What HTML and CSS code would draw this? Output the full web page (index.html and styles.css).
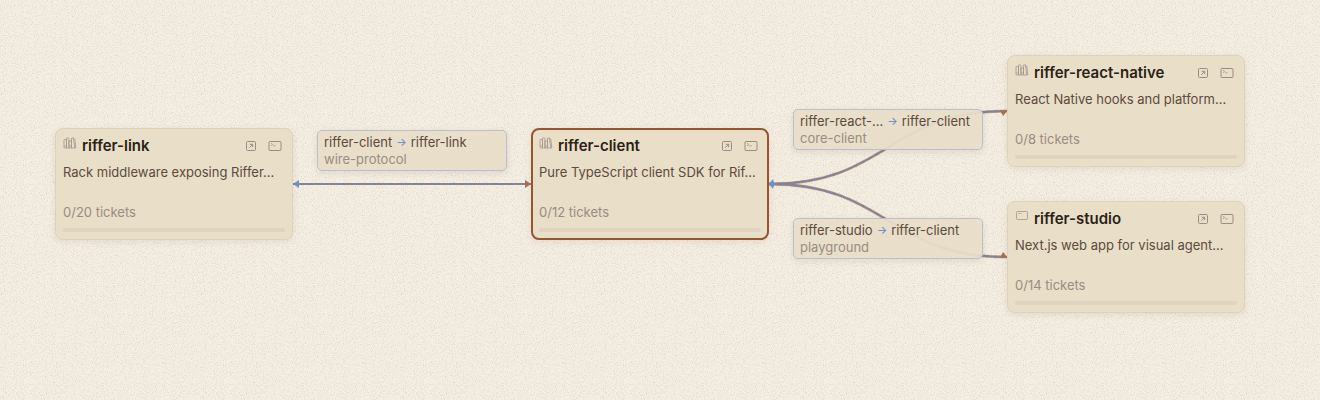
FILE: index.html
```html
<!DOCTYPE html>
<html lang="en">
<head>
    <meta charset="UTF-8">
    <meta name="viewport" content="width=device-width, initial-scale=1.0">
    <title>Riffer projects</title>
    <link rel="stylesheet" href="styles.css">
</head>
<body>
    <!-- shared icons -->
    <svg class="sprite" aria-hidden="true">
        <symbol id="icon-books" viewBox="0 0 14 12">
            <rect x="1" y="2.5" width="2.5" height="8.5" rx="0.5"/>
            <path d="M3.5 11V1.5c0-.4.2-.6.6-.6h1.2c.4 0 .6.2.6.6V11zM5.9 4h2.6v7H5.9zM6.2 9h2M1.3 9h2"/>
            <path d="M8.5 1.2l1.9-.4 1.4 10.2H8.5zM10.6 2.3l1.2-.2 1 8.7-1 .2"/>
        </symbol>
        <symbol id="icon-window" viewBox="0 0 14 12">
            <rect x="1.5" y="1.5" width="11" height="8" rx="1"/>
            <path d="M3 3.5h3.5" stroke-width="0.6"/>
        </symbol>
        <symbol id="icon-open" viewBox="0 0 12 12">
            <rect x="1.5" y="1.5" width="9" height="9" rx="1"/>
            <path d="M4.3 7.7l3.2-3.2M4.8 4.3h2.9v2.9"/>
        </symbol>
        <symbol id="icon-terminal" viewBox="0 0 14 12">
            <rect x="1" y="1.5" width="12" height="9" rx="1"/>
            <path d="M3 3.2l1.7 1.3L3 5.8M5.3 5.8h2.4" stroke-width="0.7"/>
        </symbol>
    </svg>

    <main class="canvas">
        <svg class="edges" aria-hidden="true">
            <g class="edge">
                <path class="line-blue" d="M293 184H531"/>
                <path class="line-brown" d="M301 184H526"/>
                <path class="head-blue" d="M299 180l-6 4 6 4z"/>
                <path class="head-brown" d="M525 180l6 4-6 4z"/>
            </g>
            <g class="edge">
                <path class="line-under" d="M769 184C888 184 888 111 1007 111"/>
                <path class="line-blue" d="M769 184C888 184 888 111 1007 111"/>
                <path class="line-brown" d="M769 184C888 184 888 111 1007 111"/>
                <path class="head-brown" d="M1000 110l7 1-4 5z"/>
            </g>
            <g class="edge">
                <path class="line-under" d="M769 184C888 184 888 257 1007 257"/>
                <path class="line-blue" d="M769 184C888 184 888 257 1007 257"/>
                <path class="line-brown" d="M769 184C888 184 888 257 1007 257"/>
                <path class="head-blue" d="M769 184l4-5 1 4 4 1-4 1-1 4z"/>
                <path class="head-brown" d="M1000 258l7-1-4-5z"/>
            </g>
        </svg>

        <div class="edge-label label-link">
            <div class="route"><span>riffer-client</span><span class="arrow">→</span><span>riffer-link</span></div>
            <div class="kind">wire-protocol</div>
        </div>
        <div class="edge-label label-native">
            <div class="route"><span title="riffer-react-native">riffer-react-…</span><span class="arrow">→</span><span>riffer-client</span></div>
            <div class="kind">core-client</div>
        </div>
        <div class="edge-label label-studio">
            <div class="route"><span>riffer-studio</span><span class="arrow">→</span><span>riffer-client</span></div>
            <div class="kind">playground</div>
        </div>

        <article class="node node-link">
            <header class="node-header">
                <svg class="node-icon"><use href="#icon-books"/></svg>
                <h2 class="node-title">riffer-link</h2>
                <button class="node-btn" aria-label="Open riffer-link"><svg class="icon-open"><use href="#icon-open"/></svg></button>
                <button class="node-btn" aria-label="Terminal for riffer-link"><svg class="icon-terminal"><use href="#icon-terminal"/></svg></button>
            </header>
            <p class="node-desc">Rack middleware exposing Riffer…</p>
            <p class="node-tickets">0/20 tickets</p>
            <div class="node-progress"></div>
        </article>

        <article class="node node-client selected">
            <header class="node-header">
                <svg class="node-icon"><use href="#icon-books"/></svg>
                <h2 class="node-title">riffer-client</h2>
                <button class="node-btn" aria-label="Open riffer-client"><svg class="icon-open"><use href="#icon-open"/></svg></button>
                <button class="node-btn" aria-label="Terminal for riffer-client"><svg class="icon-terminal"><use href="#icon-terminal"/></svg></button>
            </header>
            <p class="node-desc">Pure TypeScript client SDK for Rif…</p>
            <p class="node-tickets">0/12 tickets</p>
            <div class="node-progress"></div>
        </article>

        <article class="node node-native">
            <header class="node-header">
                <svg class="node-icon"><use href="#icon-books"/></svg>
                <h2 class="node-title">riffer-react-native</h2>
                <button class="node-btn" aria-label="Open riffer-react-native"><svg class="icon-open"><use href="#icon-open"/></svg></button>
                <button class="node-btn" aria-label="Terminal for riffer-react-native"><svg class="icon-terminal"><use href="#icon-terminal"/></svg></button>
            </header>
            <p class="node-desc">React Native hooks and platform…</p>
            <p class="node-tickets">0/8 tickets</p>
            <div class="node-progress"></div>
        </article>

        <article class="node node-studio">
            <header class="node-header">
                <svg class="node-icon"><use href="#icon-window"/></svg>
                <h2 class="node-title">riffer-studio</h2>
                <button class="node-btn" aria-label="Open riffer-studio"><svg class="icon-open"><use href="#icon-open"/></svg></button>
                <button class="node-btn" aria-label="Terminal for riffer-studio"><svg class="icon-terminal"><use href="#icon-terminal"/></svg></button>
            </header>
            <p class="node-desc">Next.js web app for visual agent…</p>
            <p class="node-tickets">0/14 tickets</p>
            <div class="node-progress"></div>
        </article>
    </main>
</body>
</html>
```
FILE: styles.css
```css
* {
    margin: 0;
    padding: 0;
    box-sizing: border-box;
}

body {
    min-height: 100vh;
    font-family: Inter, sans-serif;
    font-size: 13px;
    color: #5c4a3d;
    background-color: #f5eee2;
    /* paper grain */
    background-image: url("data:image/svg+xml,%3Csvg xmlns='http://www.w3.org/2000/svg' width='200' height='200'%3E%3Cfilter id='n'%3E%3CfeTurbulence type='fractalNoise' baseFrequency='0.9' numOctaves='4' stitchTiles='stitch'/%3E%3CfeColorMatrix values='0 0 0 0 0.45 0 0 0 0 0.4 0 0 0 0 0.33 0 0 0 1.2 -0.56'/%3E%3C/filter%3E%3Crect width='200' height='200' filter='url(%23n)' opacity='0.7'/%3E%3C/svg%3E");
}

.sprite {
    display: none;
}

.canvas {
    position: relative;
    min-height: 100vh;
    overflow: hidden;
}

.edges {
    position: absolute;
    inset: 0;
    width: 100%;
    height: 100%;
    fill: none;
}

.line-under {
    stroke: #b07850;
    stroke-width: 3;
    opacity: 0.5;
}

.line-blue {
    stroke: #7b86ab;
    stroke-width: 2;
}

.line-brown {
    stroke: #b07850;
    stroke-width: 2;
    stroke-dasharray: 3 5;
    opacity: 0.55;
}

.head-blue {
    fill: #6d92cc;
}

.head-brown {
    fill: #ac6f4c;
}

/* projects */
.node {
    position: absolute;
    width: 238px;
    padding: 7px;
    background: #e9dec8;
    border: 1px solid #ded3ba;
    border-radius: 8px;
    box-shadow: 0 2px 6px rgba(92, 74, 61, 0.1);
}

.node.selected {
    padding: 6px;
    border: 2px solid #96552d;
}

.node-link {
    left: 55px;
    top: 128px;
}

.node-client {
    left: 531px;
    top: 128px;
}

.node-native {
    left: 1007px;
    top: 55px;
}

.node-studio {
    left: 1007px;
    top: 201px;
}

.node-header {
    display: flex;
    align-items: center;
    height: 20px;
}

.node-icon {
    width: 14px;
    height: 12px;
    margin-right: 5px;
    margin-bottom: 6px;
    fill: none;
    stroke: #a3968a;
    stroke-width: 0.8;
}

.node-title {
    flex: 1;
    font-size: 15px;
    line-height: 20px;
    font-weight: 600;
    color: #2c1f17;
}

.node-btn {
    display: flex;
    justify-content: center;
    width: 20px;
    margin-left: 4px;
    padding: 0;
    background: none;
    border: none;
    cursor: pointer;
    fill: none;
    stroke: #9a8c82;
}

.icon-open {
    width: 12px;
    height: 12px;
}

.icon-terminal {
    width: 14px;
    height: 12px;
}

.node-desc {
    margin-top: 6px;
    line-height: 20px;
    white-space: nowrap;
    overflow: hidden;
}

.node-tickets {
    margin-top: 20px;
    line-height: 20px;
    color: #9a8c82;
}

.node-progress {
    height: 4px;
    margin-top: 6px;
    border-radius: 2px;
    background: #dfd4bf;
}

/* edge labels */
.edge-label {
    position: absolute;
    width: 190px;
    padding: 3px 6px 2px;
    line-height: 17px;
    background: rgba(232, 221, 200, 0.95);
    border: 1px solid #b9c0cb;
    border-radius: 5px;
    box-shadow: 0 2px 6px rgba(92, 74, 61, 0.12);
}

.label-link {
    left: 317px;
    top: 130px;
}

.label-native {
    left: 793px;
    top: 109px;
}

.label-studio {
    left: 793px;
    top: 218px;
}

.route {
    display: flex;
    gap: 4px;
    white-space: nowrap;
}

.arrow {
    font-size: 11px;
    font-weight: 500;
    color: #6d92cc;
}

.kind {
    color: #9a8c82;
}
```
